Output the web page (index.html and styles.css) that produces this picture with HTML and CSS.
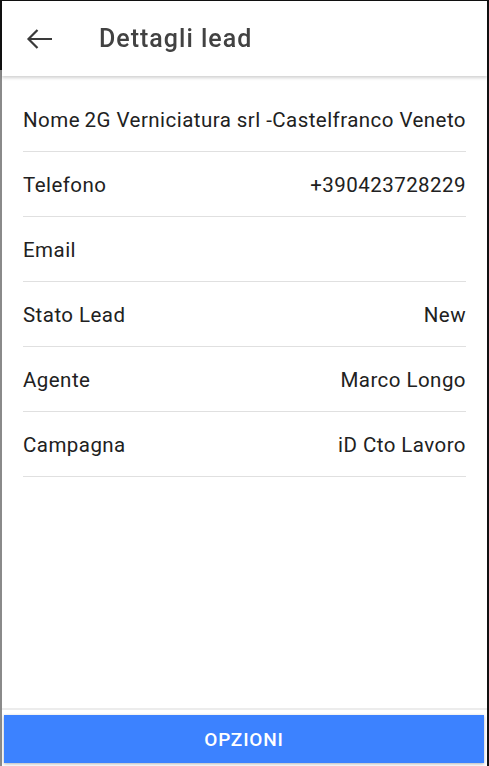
FILE: index.html
```html
<!DOCTYPE html>
<html lang="it">
<head>
<meta charset="utf-8">
<title>Dettagli lead</title>
<link rel="stylesheet" href="styles.css">
</head>
<body>
<div class="app">
  <header class="topbar">
    <button class="back" aria-label="Indietro">
      <svg width="27" height="22" viewBox="0 0 27 22"><path d="M26 11H2.5M11.5 2L2.5 11l9 9" fill="none" stroke="#3a3a3a" stroke-width="2.2"/></svg>
    </button>
    <h1 class="title">Dettagli lead</h1>
  </header>
  <main class="content">
    <ul class="details">
      <li class="row"><span class="label">Nome</span><span class="value">2G Verniciatura srl -Castelfranco Veneto</span></li>
      <li class="row"><span class="label">Telefono</span><span class="value">+390423728229</span></li>
      <li class="row"><span class="label">Email</span><span class="value"></span></li>
      <li class="row"><span class="label">Stato Lead</span><span class="value">New</span></li>
      <li class="row"><span class="label">Agente</span><span class="value">Marco Longo</span></li>
      <li class="row"><span class="label">Campagna</span><span class="value">iD Cto Lavoro</span></li>
    </ul>
  </main>
  <footer class="footer">
    <button class="primary">OPZIONI</button>
  </footer>
</div>
</body>
</html>
```
FILE: styles.css
```css
* { box-sizing: border-box; }
html, body { height: 100%; }
body {
  margin: 0;
  background: linear-gradient(to bottom, #111 0, #111 70px, #8a8a8a 70px, #8a8a8a 100%);
  font-family: Roboto, "Noto Sans", Arial, sans-serif;
  overflow: hidden;
}
.app {
  margin: 1px 2px 0 2px;
  height: 765px;
  background: #fff;
  display: flex;
  flex-direction: column;
  position: relative;
}
body::after {
  content: "";
  position: fixed;
  top: 0; right: 0;
  width: 2px; height: 100%;
  background: #111;
}
.topbar {
  height: 75px;
  flex: none;
  display: flex;
  align-items: center;
  background: #fff;
  box-shadow: 0 2px 3px rgba(0,0,0,0.18);
  position: relative;
  z-index: 1;
}
.back {
  border: 0;
  background: none;
  padding: 0;
  margin-left: 24px;
  width: 27px;
  height: 22px;
  display: flex;
}
.title {
  margin: 0 0 0 46px;
  font-size: 25px;
  font-weight: 500;
  color: #424242;
  letter-spacing: 1px;
}
.content {
  flex: 1;
  padding: 11px 21px 0 21px;
}
.details {
  list-style: none;
  margin: 0;
  padding: 0;
}
.row {
  height: 65px;
  display: flex;
  align-items: center;
  justify-content: space-between;
  border-bottom: 1px solid #e0e0e0;
  font-size: 20.5px;
  letter-spacing: 0.45px;
  color: #212121;
  padding-top: 1px;
}
.footer {
  flex: none;
  padding: 5px 3px 3px 2px;
  border-top: 2px solid #ececec;
  background: #fff;
}
.primary {
  width: 100%;
  height: 48px;
  border: 0;
  background: #3c82ff;
  color: #fff;
  font-family: Roboto, "Noto Sans", Arial, sans-serif;
  font-size: 19px;
  font-weight: 500;
  letter-spacing: 0.8px;
  box-shadow: 0 1px 3px rgba(0,0,0,0.3);
}
```
